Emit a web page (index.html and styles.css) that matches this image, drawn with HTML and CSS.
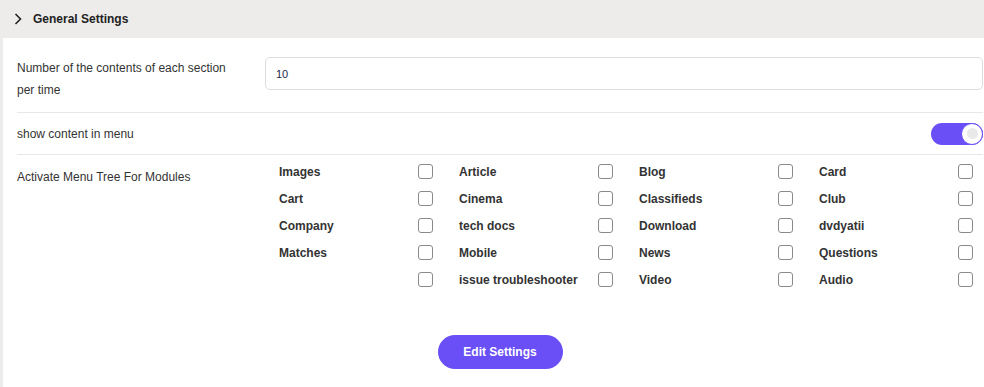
FILE: index.html
```html
<!DOCTYPE html>
<html lang="en">
<head>
  <meta charset="UTF-8">
  <title>General Settings</title>
  <link rel="stylesheet" href="styles.css">
</head>
<body>

  <div class="panel">
    <div class="panel-head">
      <svg class="chevron" width="8" height="12" viewBox="0 0 8 12">
        <path d="M1.5 1 L6.5 6 L1.5 11" fill="none" stroke="#222" stroke-width="1.6"/>
      </svg>
      <span>General Settings</span>
    </div>

    <div class="panel-body">
      <div class="row row-input">
        <label class="row-label">Number of the contents of each section per time</label>
        <input class="text-input" type="text" value="10">
      </div>

      <div class="row row-toggle">
        <span class="row-label">show content in menu</span>
        <span class="toggle"><span class="knob"></span></span>
      </div>

      <div class="row row-modules">
        <span class="row-label">Activate Menu Tree For Modules</span>
        <div class="modules">
          <div class="module"><span>Images</span><input type="checkbox"></div>
          <div class="module"><span>Article</span><input type="checkbox"></div>
          <div class="module"><span>Blog</span><input type="checkbox"></div>
          <div class="module"><span>Card</span><input type="checkbox"></div>

          <div class="module"><span>Cart</span><input type="checkbox"></div>
          <div class="module"><span>Cinema</span><input type="checkbox"></div>
          <div class="module"><span>Classifieds</span><input type="checkbox"></div>
          <div class="module"><span>Club</span><input type="checkbox"></div>

          <div class="module"><span>Company</span><input type="checkbox"></div>
          <div class="module"><span>tech docs</span><input type="checkbox"></div>
          <div class="module"><span>Download</span><input type="checkbox"></div>
          <div class="module"><span>dvdyatii</span><input type="checkbox"></div>

          <div class="module"><span>Matches</span><input type="checkbox"></div>
          <div class="module"><span>Mobile</span><input type="checkbox"></div>
          <div class="module"><span>News</span><input type="checkbox"></div>
          <div class="module"><span>Questions</span><input type="checkbox"></div>

          <div class="module"><span></span><input type="checkbox"></div>
          <div class="module"><span>issue troubleshooter</span><input type="checkbox"></div>
          <div class="module"><span>Video</span><input type="checkbox"></div>
          <div class="module"><span>Audio</span><input type="checkbox"></div>
        </div>
      </div>

      <div class="actions">
        <button class="button">Edit Settings</button>
      </div>
    </div>
  </div>

</body>
</html>
```

FILE: styles.css
```css
* {
  margin: 0;
  padding: 0;
  box-sizing: border-box;
}

html, body {
  font-family: 'Liberation Sans', Arial, sans-serif;
  font-size: 12px;
  color: #333;
  background-color: #fff;
  overflow: hidden;
}

.panel {
  width: 998px;
  background-color: #edeceb;
}

.panel-head {
  height: 38px;
  display: flex;
  align-items: center;
  gap: 11px;
  padding-left: 14px;
  font-weight: bold;
  color: #222;
}

.chevron {
  display: block;
}

.panel-body {
  margin-left: 3px;
  background-color: #fff;
  padding: 0 15px 18px 14px;
}

.row {
  display: grid;
  grid-template-columns: 248px 1fr;
  border-bottom: 1px solid #e8e8e8;
}

.row-label {
  line-height: 22px;
}

.row-input {
  padding: 19px 0 11px;
  align-items: start;
}

.row-input .row-label {
  padding-right: 30px;
}

.text-input {
  height: 33px;
  border: 1px solid #dcdcdc;
  border-radius: 5px;
  padding-left: 10px;
  font-family: inherit;
  font-size: 11px;
  color: #1d2a4a;
  outline: none;
}

.row-toggle {
  height: 42px;
  align-items: center;
}

.toggle {
  justify-self: end;
  width: 52px;
  height: 22px;
  border-radius: 11px;
  background-color: #6a4ff6;
  display: flex;
  justify-content: flex-end;
  align-items: center;
}

.knob {
  width: 22px;
  height: 22px;
  border-radius: 50%;
  background-color: #fff;
  border: 1px solid #6a4ff6;
  display: flex;
  align-items: center;
  justify-content: center;
}

.knob::after {
  content: "";
  width: 11px;
  height: 11px;
  border-radius: 50%;
  background-color: #e9e9e9;
}

.row-modules {
  border-bottom: none;
  align-items: start;
}

.row-modules .row-label {
  padding-top: 11px;
}

.modules {
  display: grid;
  grid-template-columns: repeat(4, 180px);
  padding: 3px 0 0 14px;
}

.module {
  height: 27px;
  display: flex;
  align-items: center;
  font-weight: bold;
}

.module span {
  flex: 0 0 139px;
}

.module input {
  appearance: none;
  width: 15px;
  height: 15px;
  border: 1px solid #8a8a8a;
  border-radius: 3px;
  background-color: #fff;
}

.actions {
  display: flex;
  justify-content: center;
  padding-top: 42px;
}

.button {
  width: 125px;
  height: 34px;
  border: none;
  border-radius: 17px;
  background-color: #6a4ff6;
  color: #fff;
  font-family: inherit;
  font-size: 12px;
  font-weight: bold;
}
```
